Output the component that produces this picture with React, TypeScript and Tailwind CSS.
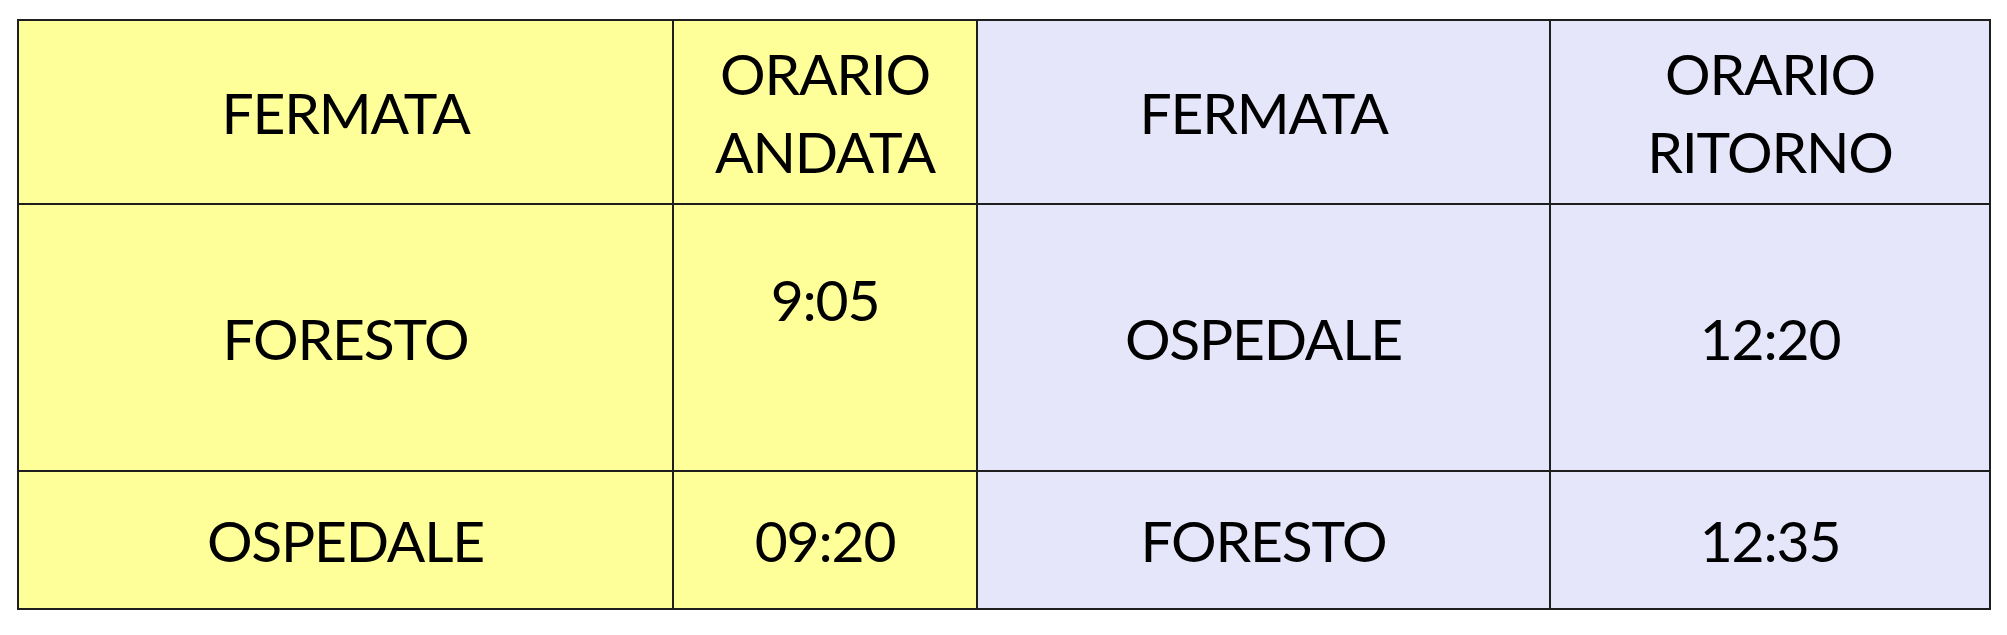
import React from "react";

const Y = "bg-[#ffff99]";
const L = "bg-[#e6e6fa]";

function Cell({ bg, children, top }: { bg: string; children: React.ReactNode; top?: boolean }) {
  return (
    <div
      className={`${bg} flex ${top ? "items-start pt-[55px]" : "items-center"} justify-center text-center text-[57px] leading-[78px] tracking-[-1.2px] text-black`}
    >
      <div>{children}</div>
    </div>
  );
}

export default function App() {
  return (
    <div className="w-[2007px] h-[635px] bg-white pl-[17px] pt-[19px]" style={{ fontFamily: "Lato, 'Liberation Sans', sans-serif" }}>
      <div className="inline-grid grid-cols-[653px_302px_571px_438px] grid-rows-[182px_265px_136px] gap-[2px] p-[2px] bg-[#1e1e1e]">
        <Cell bg={Y}>FERMATA</Cell>
        <Cell bg={Y}>ORARIO<br />ANDATA</Cell>
        <Cell bg={L}>FERMATA</Cell>
        <Cell bg={L}>ORARIO<br />RITORNO</Cell>

        <Cell bg={Y}>FORESTO</Cell>
        <Cell bg={Y} top>9:05</Cell>
        <Cell bg={L}>OSPEDALE</Cell>
        <Cell bg={L}>12:20</Cell>

        <Cell bg={Y}>OSPEDALE</Cell>
        <Cell bg={Y}>09:20</Cell>
        <Cell bg={L}>FORESTO</Cell>
        <Cell bg={L}>12:35</Cell>
      </div>
    </div>
  );
}
